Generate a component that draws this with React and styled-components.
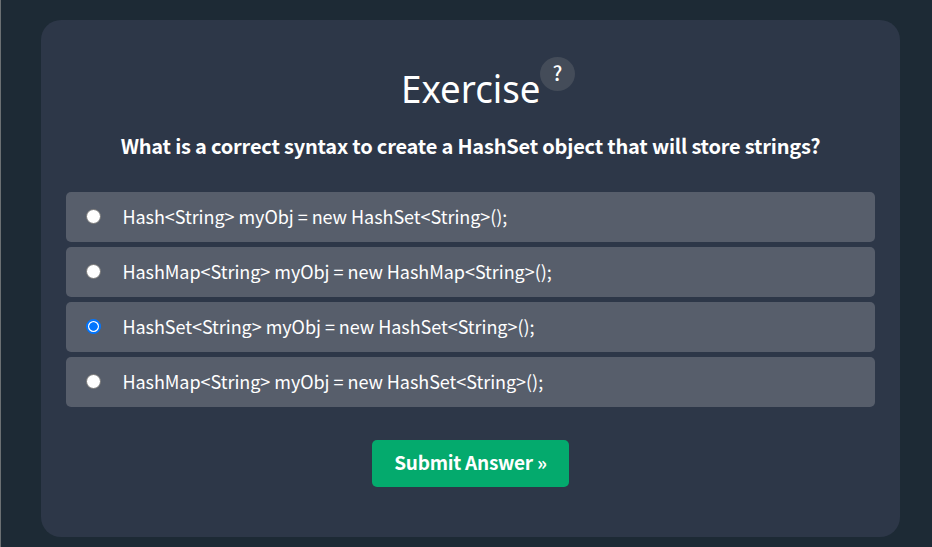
import React, { useState } from 'react';
import styled, { createGlobalStyle } from 'styled-components';

const GlobalStyle = createGlobalStyle`
  * { box-sizing: border-box; }
  body { margin: 0; background: #1d2a35; color: #fff; font-family: 'Noto Sans CJK SC', 'Noto Sans', sans-serif; }
`;

const Page = styled.main`
  height: 547px;
  padding: 20px 32px 10px 40px;
  border-left: 1px solid #6b7073;
  overflow: hidden;
`;

const Card = styled.section`
  height: 517px;
  padding: 37px 25px 0;
  border-radius: 20px;
  background: #2d3748;
  display: flex;
  flex-direction: column;
  align-items: center;
`;

const Header = styled.header`
  height: 71px;
  display: flex;
  align-items: flex-start;
  margin-left: 35px;
`;

const Title = styled.h1`
  width: 139px;
  margin: 1px 0 0;
  font: 400 39px/60px 'Noto Sans', sans-serif;
  transform: scaleX(0.94);
  transform-origin: left;
  white-space: nowrap;
`;

const HelpBadge = styled.button`
  width: 35px;
  height: 34px;
  padding: 0 0 2px;
  border: 0;
  border-radius: 50%;
  background: #444c59;
  color: #fff;
  font: 500 20px/32px 'Noto Sans CJK SC', sans-serif;
`;

const Question = styled.h2`
  margin: 0;
  height: 64px;
  font: 700 20px/35px 'Noto Sans CJK SC', sans-serif;
  letter-spacing: -0.2px;
  white-space: nowrap;
`;

const Choices = styled.div`
  width: 100%;
  display: grid;
  gap: 5px;
`;

const Choice = styled.label`
  height: 50px;
  padding: 0 20px;
  border-radius: 5px;
  background: #575e6b;
  display: flex;
  align-items: center;
`;

const Radio = styled.input`
  appearance: none;
  width: 15px;
  height: 15px;
  margin: 0 21.4px 1px 0;
  border: 1px solid #767676;
  border-radius: 50%;
  background: #fff;

  &:checked {
    border: 2px solid #0075ff;
    background: radial-gradient(circle, #0075ff 0 3.9px, #fff 4.6px);
  }
`;

const ChoiceText = styled.span`
  margin-bottom: 2px;
  font: 400 18px/30px 'Noto Sans CJK SC', sans-serif;
  letter-spacing: -0.045px;
  white-space: nowrap;
`;

const Submit = styled.button`
  width: 197px;
  height: 47px;
  margin-top: 33px;
  padding: 0 0 3px;
  border: 0;
  border-radius: 5px;
  background: #04aa6d;
  color: #fff;
  font: 700 19px/44px 'Noto Sans CJK SC', sans-serif;
  letter-spacing: -0.25px;
`;

const options = [
  'Hash<String> myObj = new HashSet<String>();',
  'HashMap<String> myObj = new HashMap<String>();',
  'HashSet<String> myObj = new HashSet<String>();',
  'HashMap<String> myObj = new HashSet<String>();',
];

export default function App() {
  const [selected, setSelected] = useState(2);
  return (
    <Page>
      <GlobalStyle />
      <Card>
        <Header>
          <Title>Exercise</Title>
          <HelpBadge>?</HelpBadge>
        </Header>
        <Question>What is a correct syntax to create a HashSet object that will store strings?</Question>
        <Choices>
          {options.map((text, i) => (
            <Choice key={i}>
              <Radio type="radio" name="answer" checked={selected === i} onChange={() => setSelected(i)} />
              <ChoiceText>{text}</ChoiceText>
            </Choice>
          ))}
        </Choices>
        <Submit>Submit Answer »</Submit>
      </Card>
    </Page>
  );
}
